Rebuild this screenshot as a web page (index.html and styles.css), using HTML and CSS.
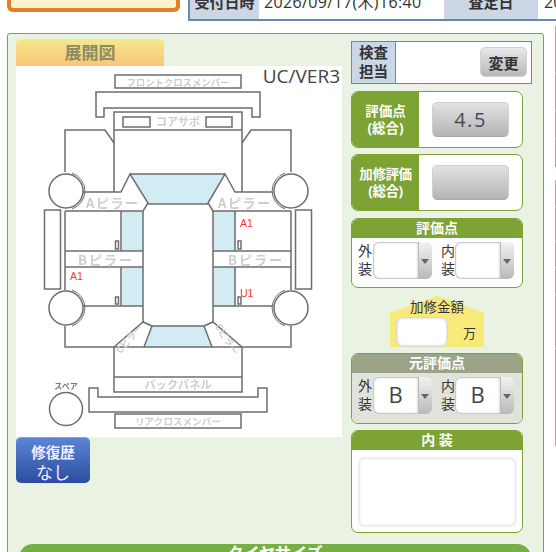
FILE: index.html
```
<!DOCTYPE html>
<html lang="ja">
<head>
<meta charset="utf-8">
<title>展開図</title>
<link rel="stylesheet" href="styles.css">
</head>
<body>
<div class="top">
  <div class="orange"></div>
  <div class="info">
    <div class="cell head h1"><span>受付日時</span></div>
    <div class="cell val v1"><span>2026/09/17(木)16:40</span></div>
    <div class="cell head h2"><span>査定日</span></div>
    <div class="cell val v2"><span>20</span></div>
  </div>
</div>
<div class="main">
  <section class="panel">
    <div class="columns">
      <div class="left">
        <div class="tab">展開図</div>
        <div class="sheet">
          <svg class="car" viewBox="16 66 326 371" width="326" height="371" xmlns="http://www.w3.org/2000/svg">
            <g class="glass">
              <polygon points="130,174 225,174 208,204 148,204"/>
              <rect x="122" y="211" width="21" height="40"/>
              <rect x="122" y="267" width="21" height="39"/>
              <rect x="213" y="211" width="22" height="40"/>
              <rect x="213" y="267" width="22" height="39"/>
              <polygon points="152,326 204,326 212,347 144,347"/>
            </g>
            <g class="line">
              <rect x="115" y="75" width="126" height="13"/>
              <path d="M96 92H260V117H252V108H104V117H96Z"/>
              <path d="M114 192V112H242V192M114 130H242"/>
              <rect x="123" y="117" width="27" height="10"/>
              <rect x="206" y="117" width="26" height="10"/>
              <path d="M65 172V130H105L114 143"/>
              <path d="M291 172V130H251L242 143"/>
              <path d="M83 192H121L130 174L148 203L143 211M143 211H65M65 211V290"/>
              <path d="M273 192H235L225 174L208 203L213 211M213 211H291M291 211V290"/>
              <path d="M130 174H225M148 204H208"/>
              <path d="M143 211V322M213 211V322"/>
              <path d="M121 211V251M121 267V306M235 211V251M235 267V306"/>
              <path d="M65 251H143M65 267H143M213 251H291M213 267H291"/>
              <path d="M83 306H143M213 306H273"/>
              <path d="M65 326V347H242V392H114V347M291 326V347H242"/>
              <path d="M114 347L143 322L152 326L144 347M242 347L213 322L204 326L212 347M152 326H204"/>
              <path d="M114 377H242"/>
              <path d="M89 388H98V397H258V388H267V412H89Z"/>
              <rect x="115" y="414" width="126" height="14"/>
              <rect x="44.500" y="210" width="16" height="79"/>
              <rect x="295.500" y="210" width="16" height="79"/>
              <rect x="115.500" y="241" width="3" height="8"/>
              <rect x="115.500" y="297" width="3" height="7"/>
              <rect x="238" y="241" width="3" height="8"/>
              <rect x="238" y="297" width="3" height="7"/>
            </g>
            <g class="line wheels">
              <circle cx="66" cy="191" r="17"/>
              <circle cx="291" cy="191" r="17"/>
              <circle cx="66" cy="308" r="17"/>
              <circle cx="291" cy="308" r="17"/>
              <circle cx="66" cy="409" r="16.500"/>
            </g>
            <g class="line arcs">
              <path d="M72 173A19 19 0 0 1 72 209M285 173A19 19 0 0 0 285 209M72 290A19 19 0 0 1 72 326M285 290A19 19 0 0 0 285 326"/>
            </g>
            <g class="part">
              <text x="178" y="85.500" class="s9" textLength="103">フロントクロスメンバー</text>
              <text x="178" y="126" class="s11" textLength="44">コアサポ</text>
              <text x="112" y="208" class="s13" textLength="52">Aピラー</text>
              <text x="244" y="208" class="s13" textLength="52">Aピラー</text>
              <text x="105" y="264.500" class="s13" textLength="54">Bピラー</text>
              <text x="255" y="264.500" class="s13" textLength="54">Bピラー</text>
              <text class="s9" x="0" y="0" transform="translate(132 341) rotate(-50)">Cピラー</text>
              <text class="s9" x="0" y="0" transform="translate(224 341) rotate(58)">Cピラー</text>
              <text x="178" y="389" class="s11" textLength="67">バックパネル</text>
              <text x="178" y="425" class="s9" textLength="86">リアクロスメンバー</text>
              <text x="66" y="389" class="s8 dark">スペア</text>
            </g>
            <g class="mark">
              <text x="240" y="227">A1</text>
              <text x="70" y="280">A1</text>
              <text x="240" y="297">U1</text>
            </g>
          </svg>
          <div class="ver">UC/VER3</div>
        </div>
        <button class="repair" type="button"><b>修復歴</b><span>なし</span></button>
      </div>
      <div class="right">
        <div class="inspector">
          <div class="ins-label">検査<br>担当</div>
          <div class="ins-body"><button class="btn-change" type="button">変更</button></div>
        </div>
        <div class="score score-a">
          <div class="score-label">評価点<br>(総合)</div>
          <div class="score-body"><div class="gray-btn">4.5</div></div>
        </div>
        <div class="score score-b">
          <div class="score-label tight">加修評価<br>(総合)</div>
          <div class="score-body"><div class="gray-btn"></div></div>
        </div>
        <div class="box box-a">
          <div class="box-head">評価点</div>
          <div class="pairs">
            <div class="lbl">外<br>装</div>
            <div class="sel"><div class="sel-val"></div><div class="sel-arrow"></div></div>
            <div class="lbl l2">内<br>装</div>
            <div class="sel"><div class="sel-val"></div><div class="sel-arrow"></div></div>
          </div>
        </div>
        <div class="amount">
          <div class="amount-title">加修金額</div>
          <div class="amount-row"><div class="amount-input"></div><span class="man">万</span></div>
        </div>
        <div class="box box-b">
          <div class="box-head olive">元評価点</div>
          <div class="pairs grayish">
            <div class="lbl">外<br>装</div>
            <div class="sel"><div class="sel-val">B</div><div class="sel-arrow"></div></div>
            <div class="lbl l2">内<br>装</div>
            <div class="sel"><div class="sel-val">B</div><div class="sel-arrow"></div></div>
          </div>
        </div>
        <div class="box box-c">
          <div class="box-head">内 装</div>
          <div class="memo-wrap"><div class="memo"></div></div>
        </div>
      </div>
    </div>
    <div class="tire">タイヤサイズ</div>
  </section>
  <div class="stripe"></div>
</div>
</body>
</html>
```
FILE: styles.css
```
* { box-sizing: border-box; }
html, body { margin: 0; padding: 0; height: 552px; overflow: hidden; background: #fff; }
body { font-family: "Open Sans", "Noto Sans CJK JP", sans-serif; color: #333; width: 556px; }

.top { display: flex; height: 21px; padding-left: 7px; margin-bottom: 12px; }
.orange { flex: none; width: 173px; height: 12px; background: #fdf3cf; border: 4px solid #e07f28; border-top: 0; border-radius: 0 0 6px 6px; }
.info { margin-left: 8px; flex: none; width: 368px; display: flex; border: 2px solid #6a86a8; border-width: 0 0 2px 2px; }
.cell { flex: none; }
.cell span { display: block; margin-top: -8px; line-height: 20px; white-space: nowrap; }
.head { background: #cdd6e4; font-weight: 700; font-size: 15px; text-align: center; color: #333; }
.h1 { width: 69px; }
.h2 { width: 94px; }
.val { background: #fff; font-size: 16px; }
.v1 { width: 185px; padding-left: 5px; letter-spacing: 0.35px; }
.v2 { width: 18px; padding-left: 6px; }

.main { display: flex; align-items: flex-start; }
.panel { flex: none; width: 537px; height: 560px; margin-left: 7px; background: #eaf2e3; border: 1px solid #7da63a; border-radius: 3px; padding: 5px 0 0 8px; }
.stripe { flex: none; width: 1px; height: 420px; margin: -7px 0 0 11px; background: linear-gradient(#c99a9f 0 47px, #e8d5d7 47px 48px, #c99a9f 48px 84px, #e8d5d7 84px 85px, #c99a9f 85px 112px, #e8d5d7 112px 113px, #c99a9f 113px 141px, #fff 141px 154px, #c99a9f 154px 180px, #e8d5d7 180px 181px, #c99a9f 181px 215px, #e8d5d7 215px 216px, #c99a9f 216px 241px, #e8d5d7 241px 242px, #c99a9f 242px 268px, #e8d5d7 268px 269px, #c99a9f 269px 322px, #e8d5d7 322px 323px, #c99a9f 323px); }

.columns { display: flex; gap: 9px; }
.left { width: 326px; }
.right { width: 181px; padding-top: 2px; display: flex; flex-direction: column; align-items: flex-start; }

.tab { width: 148px; height: 27px; border-radius: 5px 5px 0 0; background: linear-gradient(#f3e98a, #fbc679); color: #8c8c60; font-weight: 700; font-size: 17px; line-height: 28px; text-align: center; }
.sheet { position: relative; width: 326px; height: 371px; background: #fff; }
.car { display: block; filter: blur(0.35px); }
.ver { position: absolute; top: 0; right: 2px; font-size: 19px; line-height: 21px; color: #444; }

.glass polygon, .glass rect { fill: #d3ebf3; }
.line { fill: none; stroke: #6e6e6e; stroke-width: 1.5; }
.wheels { fill: #fff; }
.arcs { stroke-width: 1; }
.part text { fill: #cdcdcd; font-weight: 700; text-anchor: middle; font-family: "Noto Sans CJK JP", sans-serif; }
.s8 { font-size: 8px; }
.s9 { font-size: 9.500px; }
.s11 { font-size: 11px; }
.s13 { font-size: 13px; }
.part .dark { fill: #777; }
.mark text { fill: #f33; font-size: 10.500px; font-family: "Liberation Sans", sans-serif; }

.repair { display: flex; flex-direction: column; align-items: center; width: 74px; height: 46px; margin: 0; padding: 4px 0 0; border: 0; border-top: 1px solid #8fa3c8; border-radius: 5px; background: linear-gradient(#5b84d6, #2a4d9f); color: #eef; font-family: "Noto Sans CJK JP", sans-serif; }
.repair b { font-size: 14.500px; line-height: 19px; }
.repair span { font-size: 17px; line-height: 22px; }

.inspector { width: 181px; height: 43px; display: flex; border: 1px solid #6a86a8; background: #fff; }
.ins-label { width: 44px; background: #cdd6e4; border-right: 1px solid #6a86a8; font-weight: 700; font-size: 14.500px; line-height: 19px; text-align: center; padding-top: 1px; color: #333; }
.ins-body { flex: 1; display: flex; justify-content: flex-end; align-items: flex-start; padding: 5px 4px 0 0; }
.btn-change { width: 47px; height: 30px; margin: 0; padding: 0; border: 1px solid #d2d2d2; border-radius: 5px; background: linear-gradient(#e8e8e8, #b8b8b8); font: 700 15px "Noto Sans CJK JP", sans-serif; color: #333; }

.score { width: 172px; height: 57px; display: flex; border: 1px solid #7ca333; border-radius: 7px; background: #fff; overflow: hidden; }
.score-a { margin-top: 7px; }
.score-b { margin-top: 6px; }
.score-label { width: 67px; background: #7ca333; color: #fff; font-weight: 700; font-size: 13.500px; line-height: 17px; text-align: center; padding-top: 11px; }
.tight { letter-spacing: -0.4px; white-space: nowrap; }
.score-body { flex: 1; padding: 10px 0 0 13px; }
.gray-btn { width: 77px; height: 35px; border: 1px solid #cfcfcf; border-bottom-color: #aaa; border-radius: 5px; background: linear-gradient(#e2e2e2, #b4b4b4); font-size: 20px; line-height: 33px; text-align: center; letter-spacing: 1.500px; color: #444a58; }

.box { width: 172px; border: 1px solid #7ca333; border-radius: 7px; background: #fff; overflow: hidden; }
.box-a { height: 70px; margin-top: 7px; }
.box-b { height: 71px; margin-top: 6px; }
.box-c { height: 103px; margin-top: 6px; }
.box-head { height: 20px; margin: -1px -1px 0; background: #7ca333; color: #fff; font-weight: 700; font-size: 14px; line-height: 20px; text-align: center; }
.olive { background: #9ba487; }
.pairs { display: flex; align-items: flex-start; padding: 4px 0 0 6px; height: 50px; }
.grayish { background: #e0e3dc; }
.lbl { width: 15px; font-size: 14px; line-height: 17.500px; font-family: "Noto Sans CJK JP", sans-serif; }
.l2 { margin-left: 9px; width: 14px; }
.sel { width: 59px; height: 37px; display: flex; border-radius: 6px; overflow: hidden; box-shadow: 0 0 0 1px #cfd2cf inset; background: #fff; }
.sel-val { flex: 1; border-radius: 6px 0 0 6px; box-shadow: inset 0 0 3px #bbb; font-size: 22px; line-height: 34px; text-align: center; color: #444; }
.sel-arrow { width: 14px; position: relative; background: linear-gradient(#f2f2f2, #b9b9b9); border-left: 1px solid #bbb; }
.sel-arrow::after { content: ""; position: absolute; left: 2px; top: 17px; border: 4px solid transparent; border-top: 5px solid #666; border-bottom: 0; }

.amount { position: relative; z-index: 0; width: 94px; height: 51px; margin: 8px 0 0 39px; text-align: center; }
.amount::before { content: ""; position: absolute; inset: 0; z-index: -1; background: #f8ea7a; clip-path: polygon(50% 0, 100% 33%, 100% 100%, 0 100%, 0 33%); }
.amount-title { font-size: 13.500px; line-height: 18px; padding-top: 1px; height: 21px; font-family: "Noto Sans CJK JP", sans-serif; }
.amount-row { display: flex; align-items: center; padding-left: 6px; }
.amount-input { width: 52px; height: 30px; background: #fff; border: 1px solid #d8d8d0; border-radius: 7px; box-shadow: inset 0 0 3px #ccc; }
.man { margin-left: 15px; font-size: 13px; }

.memo-wrap { padding: 7px 5px 0 6px; }
.memo { width: 159px; height: 70px; border: 2px solid #eee; border-radius: 7px; background: #fff; box-shadow: inset 0 0 2px #ddd; }

.tire { width: 512px; height: 30px; margin: 11px 0 0 3px; border-radius: 14px 14px 0 0; background: #76b043; color: #fff; font-weight: 700; font-size: 16px; line-height: 18px; text-align: center; }
```
